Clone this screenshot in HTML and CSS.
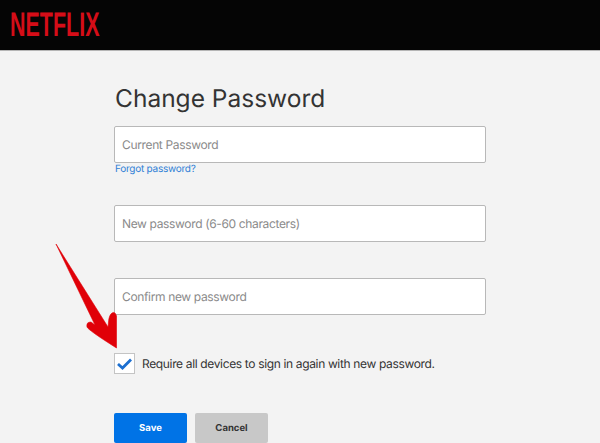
FILE: index.html
```html
<!DOCTYPE html>
<html lang="en">
<head>
  <meta charset="UTF-8">
  <title>Change Password</title>
  <link rel="stylesheet" href="styles.css">
</head>
<body>
  <header class="topbar">
    <svg class="logo" width="170" height="50" viewBox="0 0 170 50">
      <text x="10" y="36" textLength="89.5" lengthAdjust="spacingAndGlyphs">NETFLIX</text>
    </svg>
  </header>

  <main class="content">
    <h1>Change Password</h1>
    <form class="form">
      <div class="field field-first">
        <input type="text" placeholder="Current Password">
        <a class="forgot" href="#">Forgot password?</a>
      </div>
      <div class="field field-new">
        <input type="text" placeholder="New password (6-60 characters)">
      </div>
      <div class="field field-confirm">
        <input type="text" placeholder="Confirm new password">
      </div>
      <label class="check">
        <span class="box">
          <svg width="15" height="12" viewBox="0 0 15 12">
            <path d="M1 6 L5.5 10 L14 1.5" fill="none" stroke="#1c6fd0" stroke-width="2.8"/>
          </svg>
        </span>
        Require all devices to sign in again with new password.
      </label>
      <div class="buttons">
        <button type="button" class="btn btn-save">Save</button>
        <button type="button" class="btn btn-cancel">Cancel</button>
      </div>
    </form>
  </main>

  <svg class="arrow" width="70" height="115" viewBox="55 240 70 115">
    <path d="M56 244 L95 325 L91 322 Q86 322 87 327 Q88 330 116.5 348 L116.5 316 Q115 311 112 313 Q109 315 108.5 322 L108 327 Z" fill="#e00008" stroke="#e00008" stroke-width="0.6" stroke-linejoin="round"/>
  </svg>
</body>
</html>
```

FILE: styles.css
```css
* {
  box-sizing: border-box;
}

html, body {
  height: 443px;
  overflow: hidden;
}

body {
  margin: 0;
  background: #f3f3f3;
  font-family: Inter, "Liberation Sans", sans-serif;
  text-rendering: geometricPrecision;
  position: relative;
}

.topbar {
  height: 51px;
  background: #050505;
  border-bottom: 1px solid #b5b5b5;
}

.logo {
  display: block;
}

.logo text {
  font-family: "Liberation Sans", sans-serif;
  font-weight: bold;
  font-size: 34px;
  fill: #d50d18;
}

.content {
  padding: 29px 0 0 114px;
}

h1 {
  margin: 0 0 10px 1px;
  font-size: 24.5px;
  line-height: 36px;
  font-weight: 400;
  color: #333;
}

.field input {
  display: block;
  width: 372px;
  height: 37px;
  padding: 0 7px;
  background: #fff;
  border: 1px solid #b8b8b8;
  border-radius: 2px;
  font-family: inherit;
  font-size: 12px;
  letter-spacing: -0.35px;
  text-rendering: geometricPrecision;
}

.field input::placeholder {
  color: #8a8a8a;
  opacity: 1;
}

.forgot {
  display: block;
  margin: 0 0 0 1px;
  font-size: 10px;
  letter-spacing: -0.25px;
  line-height: 13px;
  color: #2f7fd6;
  text-decoration: none;
}

.field-new {
  margin-top: 29px;
}

.field-confirm {
  margin-top: 36px;
}

.check {
  display: flex;
  align-items: center;
  gap: 7px;
  margin-top: 38px;
  font-size: 12px;
  letter-spacing: -0.35px;
  color: #333;
}

.box {
  display: flex;
  align-items: center;
  justify-content: center;
  width: 21px;
  height: 21px;
  background: #fff;
  border: 1px solid #c4c4c4;
}

.buttons {
  display: flex;
  gap: 8px;
  margin-top: 39px;
}

.btn {
  width: 73px;
  height: 30px;
  border: none;
  border-radius: 2px;
  font-family: inherit;
  font-size: 9.5px;
  font-weight: 700;
  text-rendering: geometricPrecision;
}

.btn-save {
  background: #0073e6;
  color: #fff;
}

.btn-cancel {
  background: #c8c8c8;
  color: #333;
}

.arrow {
  position: absolute;
  left: 55px;
  top: 240px;
}
```
